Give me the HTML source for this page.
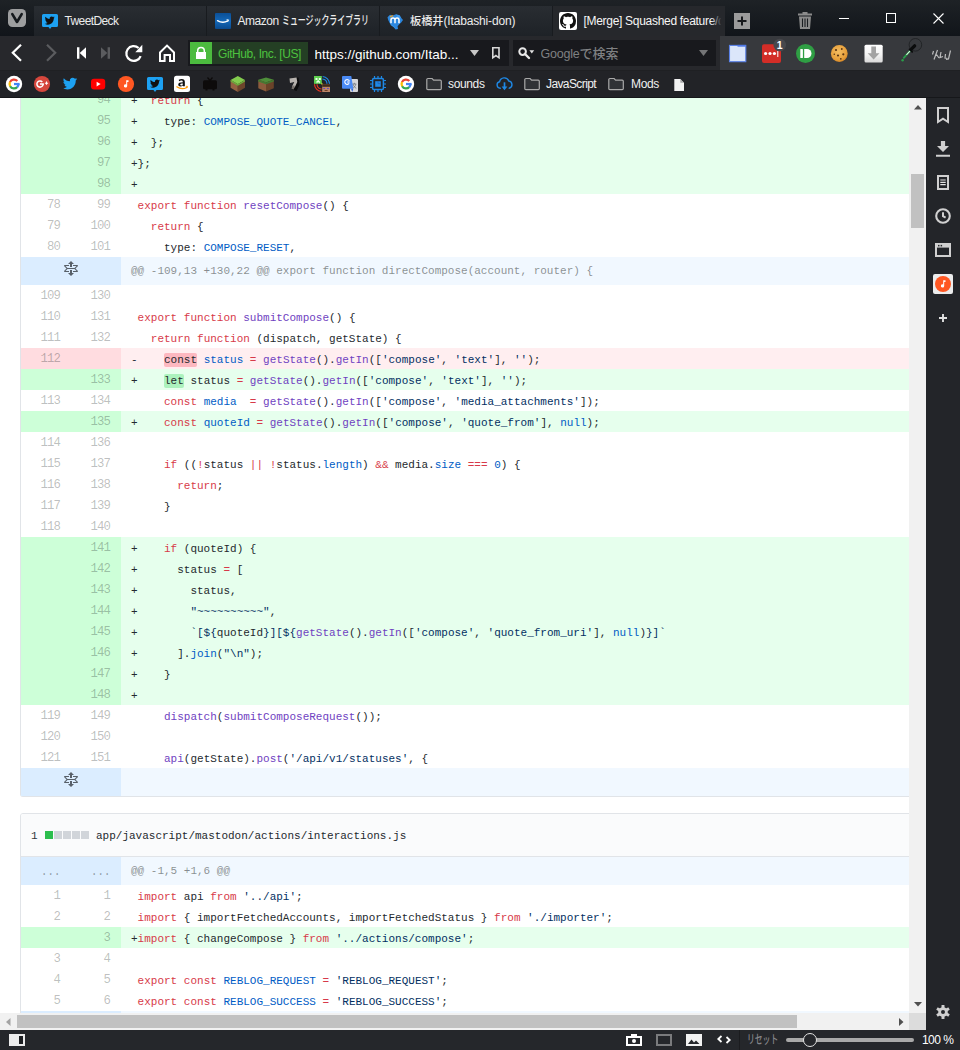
<!DOCTYPE html>
<html lang="ja">
<head>
<meta charset="utf-8">
<title>[Merge] Squashed feature/quote</title>
<style>
*{box-sizing:border-box}
html,body{margin:0;padding:0}
body{width:960px;height:1050px;overflow:hidden;background:#222428;position:relative;font-family:"Liberation Sans","Noto Sans CJK JP",sans-serif;font-size:12px;color:#e6e6e6}
.abs{position:absolute}
svg{display:block;overflow:visible}
/* ---------- page content ---------- */
#content{position:absolute;left:0;top:98px;width:909px;height:915px;background:#fff;overflow:hidden}
.file{position:absolute;left:20px;width:1400px;border:1px solid #e1e4e8;border-radius:3px;background:#fff}
#f1{top:-40px;border-top:0;border-radius:0 0 3px 3px;padding-top:31px}
#f2{top:715px}
.r{display:flex;height:21px;font:11px/24px "Liberation Mono","DejaVu Sans Mono",monospace;color:#24292e;white-space:pre;overflow:hidden}
.n{width:50px;padding:0 10.800px 0 10px;text-align:right;color:rgba(27,31,35,.3);flex:none;font-size:12.300px;letter-spacing:-.78px;line-height:23px}
.n2{width:100px;flex:none;position:relative}
.c{padding-left:10px;flex:1}
.r.a{background:#e6ffed}.r.a .n{background:#cdffd8}
.r.d{background:#ffeef0}.r.d .n{background:#ffdce0}
.r.h{height:28px;line-height:29px;background:#f1f8ff;color:rgba(27,31,35,.5)}
.r.h .n,.r.h .n2{background:#dbedff}
.r.h .n{color:rgba(27,31,35,.38);line-height:31px}
.unf{position:absolute;left:43px;top:4px}
.k{color:#d73a49}.e{color:#6f42c1}.c1,.c .c{color:#005cc5}.s{color:#032f62}
.c span.c{padding:0;display:inline}
.a .x{background:#acf2bd;border-radius:2px;padding:1px 0}
.d .x{background:#fdb8c0;border-radius:2px;padding:1px 0}
.fh{height:43px;background:#fafbfc;border-bottom:1px solid #e1e4e8;border-radius:2px 2px 0 0;position:relative;font:11px/32px "Liberation Mono","DejaVu Sans Mono",monospace;color:#24292e;white-space:pre}
.fh .cnt{position:absolute;left:10px;top:5.600px;color:#2f363d}
.fh .nm{position:absolute;left:75px;top:5.600px}
.fh i{position:absolute;top:17px;width:8px;height:8px;background:#d1d5da}
.fh i.g{background:#2cbe4e}
/* ---------- browser chrome ---------- */
#tabbar{position:absolute;left:0;top:0;width:960px;height:36px;background:linear-gradient(#1e2226,#11151a)}
.tab{position:absolute;top:6px;height:30px;width:173px;background:linear-gradient(#292d32,#1e2227);border-right:1px solid #181b1f;color:#ececec;font-size:12px;line-height:30px;white-space:nowrap;overflow:hidden}
.tab.act{background:#26282c;color:#f6f6f6;border-right:0;width:172px}
.tab .fav{position:absolute;left:7.500px;top:7.500px;width:16px;height:16px}
.tab .tt{position:absolute;left:30.5px;top:0;letter-spacing:-.45px}
.jp{display:inline-block;transform-origin:0 50%;letter-spacing:0;font-weight:500}
#addr{position:absolute;left:0;top:36px;width:960px;height:34px;background:#27282c}
#bm{position:absolute;left:0;top:70px;width:960px;height:28px;background:#222327;border-top:1px solid #1f2023;border-bottom:1px solid #16171a}
.field{position:absolute;top:5px;height:25px;background:#18191d}
.bi{position:absolute;top:5px;width:16px;height:16px}
.bt{position:absolute;top:0;line-height:26px;font-size:12px;color:#f0f0f0;letter-spacing:-.35px;white-space:nowrap}
#ext{position:absolute;left:720px;top:0;width:240px;height:34px;background:#37393d}
#vs{position:absolute;left:909px;top:98px;width:17px;height:915px;background:#f1f1f1}
#hs{position:absolute;left:0;top:1013px;width:909px;height:17px;background:#f1f1f1}
#corner{position:absolute;left:909px;top:1013px;width:17px;height:17px;background:#dcdcdc}
.thumb{position:absolute;background:#c1c1c1}
#panel{position:absolute;left:926px;top:98px;width:34px;height:932px;background:#232529}
#panel svg{position:absolute}
#status{position:absolute;left:0;top:1030px;width:960px;height:20px;background:#25272b}
#status svg{position:absolute}

</style>
</head>
<body>
<div id="content">
<div class="file" id="f1">
<div class="r a"><div class="n"></div><div class="n">94</div><div class="c">+  <span class="k">return</span> {</div></div>
<div class="r a"><div class="n"></div><div class="n">95</div><div class="c">+    type: <span class="c">COMPOSE_QUOTE_CANCEL</span>,</div></div>
<div class="r a"><div class="n"></div><div class="n">96</div><div class="c">+  };</div></div>
<div class="r a"><div class="n"></div><div class="n">97</div><div class="c">+};</div></div>
<div class="r a"><div class="n"></div><div class="n">98</div><div class="c">+</div></div>
<div class="r"><div class="n">78</div><div class="n">99</div><div class="c"> <span class="k">export</span> <span class="k">function</span> <span class="e">resetCompose</span>() {</div></div>
<div class="r"><div class="n">79</div><div class="n">100</div><div class="c">   <span class="k">return</span> {</div></div>
<div class="r"><div class="n">80</div><div class="n">101</div><div class="c">     type: <span class="c">COMPOSE_RESET</span>,</div></div>
<div class="r h"><div class="n2"><svg class="unf" viewBox="0 0 14 16" width="14" height="16"><path fill="#586069" fill-rule="evenodd" d="M11.5 7.5L14 10c0 .55-.45 1-1 1H9v-1h3.5l-2-2h-7l-2 2H5v1H1c-.55 0-1-.45-1-1l2.5-2.5L0 5c0-.55.45-1 1-1h4v1H1.5l2 2h7l2-2H9V4h4c.55 0 1 .45 1 1l-2.5 2.5zM6 6h2V3h2L7 0 4 3h2v3zm2 3H6v3H4l3 3 3-3H8V9z"/></svg></div><div class="c">@@ -109,13 +130,22 @@ export function directCompose(account, router) {</div></div>
<div class="r"><div class="n">109</div><div class="n">130</div><div class="c"></div></div>
<div class="r"><div class="n">110</div><div class="n">131</div><div class="c"> <span class="k">export</span> <span class="k">function</span> <span class="e">submitCompose</span>() {</div></div>
<div class="r"><div class="n">111</div><div class="n">132</div><div class="c">   <span class="k">return</span> <span class="k">function</span> (dispatch, getState) {</div></div>
<div class="r d"><div class="n">112</div><div class="n"></div><div class="c">-    <span class="x">const</span> <span class="c">status</span> <span class="k">=</span> <span class="e">getState</span>().<span class="e">getIn</span>([<span class="s">'compose'</span>, <span class="s">'text'</span>], <span class="s">''</span>);</div></div>
<div class="r a"><div class="n"></div><div class="n">133</div><div class="c">+    <span class="x">let</span> status <span class="k">=</span> <span class="e">getState</span>().<span class="e">getIn</span>([<span class="s">'compose'</span>, <span class="s">'text'</span>], <span class="s">''</span>);</div></div>
<div class="r"><div class="n">113</div><div class="n">134</div><div class="c">     <span class="k">const</span> <span class="c">media</span>  <span class="k">=</span> <span class="e">getState</span>().<span class="e">getIn</span>([<span class="s">'compose'</span>, <span class="s">'media_attachments'</span>]);</div></div>
<div class="r a"><div class="n"></div><div class="n">135</div><div class="c">+    <span class="k">const</span> <span class="c">quoteId</span> <span class="k">=</span> <span class="e">getState</span>().<span class="e">getIn</span>([<span class="s">'compose'</span>, <span class="s">'quote_from'</span>], <span class="c">null</span>);</div></div>
<div class="r"><div class="n">114</div><div class="n">136</div><div class="c"></div></div>
<div class="r"><div class="n">115</div><div class="n">137</div><div class="c">     <span class="k">if</span> ((<span class="k">!</span>status <span class="k">||</span> <span class="k">!</span>status.<span class="c">length</span>) <span class="k">&amp;&amp;</span> media.<span class="c">size</span> <span class="k">===</span> <span class="c">0</span>) {</div></div>
<div class="r"><div class="n">116</div><div class="n">138</div><div class="c">       <span class="k">return</span>;</div></div>
<div class="r"><div class="n">117</div><div class="n">139</div><div class="c">     }</div></div>
<div class="r"><div class="n">118</div><div class="n">140</div><div class="c"></div></div>
<div class="r a"><div class="n"></div><div class="n">141</div><div class="c">+    <span class="k">if</span> (quoteId) {</div></div>
<div class="r a"><div class="n"></div><div class="n">142</div><div class="c">+      status <span class="k">=</span> [</div></div>
<div class="r a"><div class="n"></div><div class="n">143</div><div class="c">+        status,</div></div>
<div class="r a"><div class="n"></div><div class="n">144</div><div class="c">+        <span class="s">"~~~~~~~~~~"</span>,</div></div>
<div class="r a"><div class="n"></div><div class="n">145</div><div class="c">+        <span class="s">`[${</span>quoteId<span class="s">}][${</span><span class="e">getState</span>().<span class="e">getIn</span>([<span class="s">'compose'</span>, <span class="s">'quote_from_uri'</span>], <span class="c">null</span>)<span class="s">}]`</span></div></div>
<div class="r a"><div class="n"></div><div class="n">146</div><div class="c">+      ].<span class="c">join</span>(<span class="s">"\n"</span>);</div></div>
<div class="r a"><div class="n"></div><div class="n">147</div><div class="c">+    }</div></div>
<div class="r a"><div class="n"></div><div class="n">148</div><div class="c">+</div></div>
<div class="r"><div class="n">119</div><div class="n">149</div><div class="c">     <span class="e">dispatch</span>(<span class="e">submitComposeRequest</span>());</div></div>
<div class="r"><div class="n">120</div><div class="n">150</div><div class="c"></div></div>
<div class="r"><div class="n">121</div><div class="n">151</div><div class="c">     <span class="e">api</span>(getState).<span class="e">post</span>(<span class="s">'/api/v1/statuses'</span>, {</div></div>
<div class="r h"><div class="n2"><svg class="unf" viewBox="0 0 14 16" width="14" height="16"><path fill="#586069" fill-rule="evenodd" d="M11.5 7.5L14 10c0 .55-.45 1-1 1H9v-1h3.5l-2-2h-7l-2 2H5v1H1c-.55 0-1-.45-1-1l2.5-2.5L0 5c0-.55.45-1 1-1h4v1H1.5l2 2h7l2-2H9V4h4c.55 0 1 .45 1 1l-2.5 2.5zM6 6h2V3h2L7 0 4 3h2v3zm2 3H6v3H4l3 3 3-3H8V9z"/></svg></div><div class="c"></div></div>
</div>
<div class="file" id="f2">
<div class="fh"><span class="cnt">1</span><i class="g" style="left:24px"></i><i style="left:33px"></i><i style="left:42px"></i><i style="left:51px"></i><i style="left:60px"></i><span class="nm">app/javascript/mastodon/actions/interactions.js</span></div>
<div class="r h"><div class="n">...</div><div class="n">...</div><div class="c">@@ -1,5 +1,6 @@</div></div>
<div class="r"><div class="n">1</div><div class="n">1</div><div class="c"> <span class="k">import</span> api <span class="k">from</span> <span class="s">'../api'</span>;</div></div>
<div class="r"><div class="n">2</div><div class="n">2</div><div class="c"> <span class="k">import</span> { importFetchedAccounts, importFetchedStatus } <span class="k">from</span> <span class="s">'./importer'</span>;</div></div>
<div class="r a"><div class="n"></div><div class="n">3</div><div class="c">+<span class="k">import</span> { changeCompose } <span class="k">from</span> <span class="s">'../actions/compose'</span>;</div></div>
<div class="r"><div class="n">3</div><div class="n">4</div><div class="c"></div></div>
<div class="r"><div class="n">4</div><div class="n">5</div><div class="c"> <span class="k">export</span> <span class="k">const</span> <span class="c">REBLOG_REQUEST</span> <span class="k">=</span> <span class="s">'REBLOG_REQUEST'</span>;</div></div>
<div class="r"><div class="n">5</div><div class="n">6</div><div class="c"> <span class="k">export</span> <span class="k">const</span> <span class="c">REBLOG_SUCCESS</span> <span class="k">=</span> <span class="s">'REBLOG_SUCCESS'</span>;</div></div>
<div class="r h"><div class="n2"></div><div class="c"></div></div>
</div>
</div>
<div id="tabbar">
  <svg class="abs" style="left:8px;top:9px" width="18" height="18" viewBox="0 0 18 18"><rect width="18" height="18" rx="4.5" fill="#9d9e9f"/><path d="M4.3 5.2 L9 13 L13.7 5.2" fill="none" stroke="#15191d" stroke-width="2.6" stroke-linecap="round" stroke-linejoin="round"/></svg>
  <div class="tab" style="left:34px">
    <svg class="fav" viewBox="0 0 16 16"><path d="M1.5 0h13A1.5 1.5 0 0 1 16 1.500v10A1.500 1.500 0 0 1 14.500 13H9.500L8 15 6.500 13H1.500A1.500 1.500 0 0 1 0 11.500v-10A1.500 1.500 0 0 1 1.500 0z" fill="#1da1f2"/><path d="M12.700 3.400c-.4.200-.8.300-1.200.350.450-.250.750-.650.900-1.150-.4.250-.85.400-1.300.500a2.050 2.050 0 0 0-3.500 1.850C5.900 4.850 4.400 4.050 3.400 2.800c-.55.950-.25 2.150.650 2.750-.350 0-.650-.1-.950-.250 0 1 .7 1.850 1.650 2.050-.3.100-.6.100-.9.050.250.850 1.050 1.400 1.900 1.450-.85.650-1.950.950-3.050.850.950.600 2.050.950 3.150.950 3.800 0 5.900-3.150 5.900-5.900v-.250c.4-.3.750-.650 1-1.100z" fill="#111"/></svg>
    <span class="tt" style="letter-spacing:-.62px">TweetDeck</span>
  </div>
  <div class="tab" style="left:207px">
    <svg class="fav" style="left:7.800px;top:6.500px" viewBox="0 0 16 16"><defs><linearGradient id="amz" x1="0" y1="0" x2="0" y2="1"><stop offset="0" stop-color="#0b4f96"/><stop offset=".5" stop-color="#1468b8"/><stop offset="1" stop-color="#0a4a8e"/></linearGradient></defs><rect width="16" height="16" rx="1" fill="url(#amz)"/><path d="M2.500 7.600c3.400 2.100 7.300 2 10.300.3" fill="none" stroke="#fff" stroke-width="1.300" stroke-linecap="round"/><path d="M11.600 6.700l2 .2-.9 1.800" fill="none" stroke="#fff" stroke-width=".9"/></svg>
    <span class="tt">Amazon <span class="jp" style="transform:scaleX(.66)">ミュージックライブラリ</span></span>
  </div>
  <div class="tab" style="left:380px">
    <svg class="fav" style="left:7px;top:7.500px" viewBox="0 0 16 16"><path d="M.5 3.200L3 .8 5.800 1.600 9 .2 12.800 1.200 14.300 4 16 6 14.200 8.600 12 10.500 10.600 12.200 11 15 8.600 15.500 6.500 13 4 11.500 2.400 8.500 1.200 6z" fill="#2b87df"/><path d="M9 .6l3.500.8 1.300 2.600-3 .5zM3 9l3.500 3 2 2.500-3-2.500z" fill="#4aa3f2" opacity=".7"/><path d="M4 9.200V6a2 2 0 0 1 4 0v3.200M8 6a2 2 0 0 1 4 0v3.200" fill="none" stroke="#fff" stroke-width="1.500"/><path d="M3 3.300a3 3 0 0 1 3.300-1.300" fill="none" stroke="#f5a21a" stroke-width="1.200"/></svg>
    <span class="tt"><span class="jp" style="transform:scaleX(.97);font-size:11.500px;margin-left:-.500px">板橋井</span><span style="margin-left:-1px;letter-spacing:-.16px">(Itabashi-don)</span></span>
  </div>
  <div class="tab act" style="left:553px">
    <svg class="fav" style="left:6px;top:6px;width:18px;height:18px" viewBox="0 0 18 18"><rect width="18" height="18" rx="2" fill="#fff"/><path transform="translate(1 1)" fill="#111" fill-rule="evenodd" d="M8 0C3.580 0 0 3.580 0 8c0 3.540 2.290 6.530 5.470 7.590.4.070.550-.170.550-.380 0-.190-.010-.820-.010-1.490-2.010.370-2.530-.490-2.690-.940-.090-.230-.480-.940-.820-1.130-.280-.150-.680-.520-.010-.530.630-.010 1.080.580 1.230.820.720 1.210 1.870.870 2.330.660.070-.520.280-.870.510-1.070-1.780-.200-3.640-.890-3.640-3.950 0-.870.310-1.590.820-2.150-.080-.200-.360-1.020.080-2.120 0 0 .670-.210 2.200.820.640-.180 1.320-.270 2-.270.680 0 1.360.090 2 .270 1.530-1.040 2.200-.820 2.200-.820.440 1.100.160 1.920.080 2.120.510.560.820 1.270.820 2.150 0 3.070-1.870 3.750-3.650 3.950.290.250.540.730.540 1.480 0 1.070-.010 1.930-.010 2.200 0 .210.150.460.550.380A8.013 8.013 0 0 0 16 8c0-4.420-3.580-8-8-8z"/></svg>
    <span class="tt" style="letter-spacing:-.3px">[Merge] Squashed feature/quote</span>
    <div class="abs" style="right:0;top:0;width:14px;height:30px;background:linear-gradient(90deg,rgba(38,40,44,0),#26282c 75%)"></div>
  </div>
  <svg class="abs" style="left:734px;top:13px" width="16" height="16" viewBox="0 0 16 16"><rect width="16" height="16" fill="#9b9b9b"/><path d="M8 3.500v9M3.500 8h9" stroke="#17191c" stroke-width="2"/></svg>
  <svg class="abs" style="left:798px;top:12px" width="14" height="17" viewBox="0 0 14 17"><path d="M4.500 0h5v1.500H14V3.500H0V1.500h4.500zM1 4.500h12L12 17H2z" fill="#8b8b8b"/><path d="M4.500 6.500v8.500M7 6.500v8.500M9.500 6.500v8.500" stroke="#1a1d21" stroke-width="1.100"/></svg>
  <svg class="abs" style="left:838px;top:12px" width="110" height="12" viewBox="0 0 110 12"><path d="M1 6.500h10" stroke="#fff" stroke-width="1"/><rect x="48.500" y="1.500" width="9" height="9" fill="none" stroke="#fff" stroke-width="1"/><path d="M95.500 1.500l10 10M105.500 1.500l-10 10" stroke="#fff" stroke-width="1.100"/></svg>
</div>
<div id="addr">
  <svg class="abs" style="left:0;top:0" width="190" height="35" viewBox="0 0 190 35">
    <g transform="translate(0 -.8)">
    <path d="M21 9.500L12.800 17.500 21 25.500" fill="none" stroke="#fff" stroke-width="2.200"/>
    <path d="M47 9.500L55.200 17.500 47 25.500" fill="none" stroke="#5b5c5f" stroke-width="2.200"/>
    <path d="M77 12h2.400v11.500H77zM86 12v11.500l-6.300-5.750z" fill="#fff"/>
    <path d="M107.600 12h2.400v11.500h-2.400zM101 12v11.500l6.300-5.750z" fill="#5b5c5f"/>
    </g>
    <path d="M138.65 12.00A7.40 7.40 0 1 0 140.65 20.03" fill="none" stroke="#fff" stroke-width="2.200"/>
    <path d="M142.300 8.800v7.500h-7z" fill="#fff"/>
    <path d="M160 25V16.500L167 9.600 174 16.500V25H170V19H164.600V25z" fill="none" stroke="#fff" stroke-width="2" stroke-linejoin="miter"/>
  </svg>
  <div class="field" style="left:188px;top:4px;width:321px;height:26px">
    <div class="abs" style="left:2px;top:2px;width:22px;height:22px;background:#4cbb3f">
      <svg class="abs" style="left:5px;top:4px" width="12" height="14" viewBox="0 0 12 14"><path d="M2.700 6.500V4.700a3.300 3.300 0 0 1 6.600 0v1.800" fill="none" stroke="#fff" stroke-width="1.500"/><rect x="1" y="6" width="10" height="7" fill="#fff"/></svg>
    </div>
    <div class="abs" style="left:24px;top:2px;width:96px;height:22px;background:#243f24;color:#4dc23f;font-size:12px;line-height:25px;overflow:hidden;letter-spacing:-.42px;padding-left:6px;white-space:nowrap">GitHub, Inc. [US]</div>
    <div class="abs" style="left:126.500px;top:0;height:26px;line-height:29px;overflow:hidden;font-size:13.500px;color:#fff;letter-spacing:0;white-space:nowrap">https://github.com/Itab...</div>
    <svg class="abs" style="left:282px;top:10px" width="9" height="6" viewBox="0 0 9 6"><path d="M0 0h9L4.500 6z" fill="#c8c8c8"/></svg>
    <svg class="abs" style="left:304.300px;top:6.700px" width="7.800" height="12" viewBox="0 0 7.800 12"><path d="M.8 .8h6.200v10L3.900 8.600 .8 10.800z" fill="none" stroke="#d8d8d8" stroke-width="1.600"/></svg>
  </div>
  <div class="field" style="left:513px;top:4px;width:203px;height:26px">
    <svg class="abs" style="left:5px;top:7px" width="18" height="13" viewBox="0 0 18 13"><circle cx="4.600" cy="4.600" r="3.300" fill="none" stroke="#e8e8e8" stroke-width="2"/><path d="M7 7l4 4" stroke="#e8e8e8" stroke-width="2.400" stroke-linecap="round"/><path d="M11.400 3.200h4.800l-2.400 3.400z" fill="#e0e0e0"/></svg>
    <div class="abs" style="left:27.500px;top:0;height:26px;line-height:28px;overflow:hidden;font-size:12.500px;color:#7f8082;white-space:nowrap;letter-spacing:-.2px">Google<span style="font-size:13px;letter-spacing:0;font-weight:500">で検索</span></div>
    <svg class="abs" style="left:186px;top:10px" width="9" height="6" viewBox="0 0 9 6"><path d="M0 0h9L4.500 6z" fill="#747577"/></svg>
  </div>
  <div id="ext">
    <svg class="abs" style="left:0;top:0" width="240" height="34" viewBox="0 0 240 34">
      <!-- tab-like -->
      <rect x="9.500" y="9.400" width="16.300" height="16.300" fill="#dbe6fa" stroke="#5b82e8" stroke-width="1.100"/><path d="M17.500 9.800h8.300" stroke="#4f78e6" stroke-width="1.800"/>
      <!-- lastpass -->
      <rect x="42" y="8.200" width="19" height="18.700" rx="2" fill="#d32d27"/>
      <circle cx="45.600" cy="17.500" r="1.600" fill="#fff"/><circle cx="50" cy="17.500" r="1.600" fill="#fff"/><circle cx="54.400" cy="17.500" r="1.600" fill="#fff"/><rect x="57.300" y="14.300" width="1" height="6.700" fill="#fff"/>
      <circle cx="59.750" cy="9" r="6.300" fill="#47484c"/>
      <text x="59.700" y="12.700" font-size="10.500" font-weight="bold" font-family="Liberation Sans, sans-serif" text-anchor="middle" fill="#fff">1</text>
      <!-- pushbullet -->
      <circle cx="85.500" cy="17.500" r="9.500" fill="#2f9e44"/>
      <rect x="80.300" y="13" width="2.600" height="9" rx=".6" fill="#fff"/>
      <path d="M84.200 13h2.800a4.500 4.500 0 0 1 0 9h-2.800z" fill="#fff"/>
      <!-- cookie -->
      <defs><radialGradient id="ck" cx=".45" cy=".4" r=".65"><stop offset="0" stop-color="#f3bd62"/><stop offset=".7" stop-color="#e8a13c"/><stop offset="1" stop-color="#cf7f22"/></radialGradient><linearGradient id="dl" x1="0" y1="0" x2="0" y2="1"><stop offset="0" stop-color="#fff"/><stop offset=".55" stop-color="#f4f4f4"/><stop offset="1" stop-color="#d9d9d9"/></linearGradient></defs>
      <circle cx="119.300" cy="17.500" r="8.400" fill="url(#ck)"/>
      <circle cx="116" cy="14" r="1.100" fill="#5b3513"/><circle cx="121.800" cy="13" r=".9" fill="#5b3513"/><circle cx="123.300" cy="18.300" r="1.100" fill="#5b3513"/><circle cx="118" cy="19.500" r="1.100" fill="#5b3513"/><circle cx="114.300" cy="18.300" r=".8" fill="#5b3513"/><circle cx="120.800" cy="22.800" r=".9" fill="#5b3513"/>
      <!-- download -->
      <rect x="144.500" y="8.700" width="18.200" height="17.800" rx="1.500" fill="url(#dl)"/>
      <path d="M151.300 10.500h4.700v6.700h3.500L153.600 23.400l-5.900-6.200h3.600z" fill="#a3a3a3"/>
      <!-- eyedropper -->
      <circle cx="195.400" cy="8.800" r="6.300" fill="none" stroke="#1f2124" stroke-width=".9"/>
      <path d="M183.800 21.800L190.200 14.600" stroke="#2a9d4a" stroke-width="1.900" stroke-linecap="round"/>
      <path d="M186.800 18.500L190 15" stroke="#e8f5ec" stroke-width="1.100" stroke-linecap="round"/>
      <path d="M189.600 13.300l2.600 2.600" stroke="#0b0c0d" stroke-width="1.800" stroke-linecap="round"/>
      <path d="M191.600 12.900L194.600 9.900" stroke="#0b0c0d" stroke-width="3.400" stroke-linecap="round"/>
      <circle cx="182.600" cy="24.300" r="1.200" fill="#2a9d4a"/>
      <!-- scribble -->
      <g stroke="#dcdcdc" stroke-width="1.200" fill="none" opacity=".8">
        <path d="M213.500 15l-1 3.500M217.500 14l-3.500 9.500M216.500 18.500l2.500 3.500M221 16l-1 5.500 3-1M225.500 18l-.5 4 2.500.5M230.500 14.500l-2 8.500-2.500.5"/>
      </g>
    </svg>
  </div>
</div>
<div id="bm">
<svg class="bi" style="left:6px" viewBox="0 0 16 16"><circle cx="8" cy="8" r="8.200" fill="#fff"/><path d="M3.97 6.12A4.45 4.45 0 0 1 11.31 5.02" fill="none" stroke="#ea4335" stroke-width="2.3"/><path d="M4.23 10.36A4.45 4.45 0 0 1 4.04 5.98" fill="none" stroke="#fbbc05" stroke-width="2.3"/><path d="M11.31 10.98A4.45 4.45 0 0 1 4.15 10.22" fill="none" stroke="#34a853" stroke-width="2.3"/><path d="M12.45 8.00A4.45 4.45 0 0 1 11.20 11.09" fill="none" stroke="#4285f4" stroke-width="2.3"/><path d="M8 6.900h5.600v2.250H8z" fill="#4285f4"/></svg>
<svg class="bi" style="left:34px" viewBox="0 0 16 16"><circle cx="8" cy="8" r="8.100" fill="#d6473d"/><path d="M9.10 8.00A3.10 3.10 0 1 1 8.30 5.93" fill="none" stroke="#fff" stroke-width="1.500"/><path d="M6 8h3.850" stroke="#fff" stroke-width="1.500"/><path d="M12.500 5.600v3.200M10.900 7.200h3.200" stroke="#fff" stroke-width="1.100"/></svg>
<svg class="bi" style="left:62px" viewBox="0 0 16 16"><path d="M15.200 3.100c-.55.250-1.100.400-1.700.480.620-.370 1.080-.950 1.300-1.640-.570.340-1.200.580-1.880.710a2.950 2.950 0 0 0-5.030 2.690C5.440 5.220 3.270 4.050 1.810 2.260c-.780 1.350-.380 3.070.910 3.940-.470-.010-.930-.140-1.340-.370v.040c0 1.400 1 2.620 2.370 2.900-.430.120-.890.130-1.330.050.390 1.200 1.500 2.020 2.760 2.050A5.930 5.930 0 0 1 .800 12.090 8.360 8.360 0 0 0 5.330 13.400c5.430 0 8.400-4.500 8.400-8.400v-.380c.580-.420 1.080-.940 1.470-1.520z" fill="#1da1f2"/></svg>
<svg class="bi" style="left:90px" viewBox="0 0 16 16"><rect x="1" y="2.700" width="14.200" height="10.800" rx="3" fill="#f00"/><path d="M6.600 5.700v4.800l4-2.400z" fill="#fff"/></svg>
<svg class="bi" style="left:118px" viewBox="0 0 16 16"><circle cx="8" cy="8" r="8.100" fill="#ff5722"/><path d="M8.200 4.300h2.300v1.600H9.200v4a1.650 1.650 0 1 1-1-1.500z" fill="#fff"/></svg>
<svg class="bi" style="left:146.500px" viewBox="0 0 16 16"><path d="M1.500 1h13A1.500 1.500 0 0 1 16 2.500v10a1.500 1.500 0 0 1-1.500 1.500H9.500L8 16 6.500 14h-5A1.500 1.500 0 0 1 0 12.500v-10A1.500 1.500 0 0 1 1.500 1z" fill="#1da1f2"/><path transform="translate(2.400 2.300) scale(.7)" d="M15.200 3.100c-.55.250-1.100.400-1.700.480.620-.370 1.080-.950 1.300-1.640-.570.340-1.200.580-1.880.710a2.950 2.950 0 0 0-5.030 2.690C5.440 5.220 3.270 4.050 1.810 2.260c-.780 1.350-.380 3.070.910 3.940-.470-.010-.930-.140-1.340-.370v.040c0 1.400 1 2.620 2.370 2.900-.430.120-.890.130-1.330.050.390 1.200 1.500 2.020 2.760 2.050A5.930 5.930 0 0 1 .800 12.090 8.360 8.360 0 0 0 5.330 13.400c5.430 0 8.400-4.500 8.400-8.400v-.380c.580-.420 1.080-.940 1.470-1.520z" fill="#111"/></svg>
<svg class="bi" style="left:174px" viewBox="0 0 16 16"><rect width="16" height="16.300" y="-.2" rx="2.500" fill="#fff"/><path transform="translate(-1.900 -1.700) scale(1.250)" d="M10.200 9.600H8.700v-.7c-.5.600-1.200.9-2 .9-1.100 0-1.800-.7-1.800-1.600 0-1.400 1.300-1.900 3.700-1.900 0-.9-.3-1.300-1.200-1.300-.6 0-1.200.2-1.800.5l-.3-1.100c.7-.4 1.600-.6 2.400-.6 1.700 0 2.500.8 2.500 2.400zM8.600 7.300c-1.400 0-2.100.2-2.100.9 0 .4.300.7.800.7.600 0 1.100-.4 1.300-.8z" fill="#111"/><path d="M2.800 10.800c3.200 2.200 7 2.300 10 .6" fill="none" stroke="#f90" stroke-width="1.200" stroke-linecap="round"/><path d="M11.800 10.300l1.800.1-.8 1.700" fill="none" stroke="#f90" stroke-width=".9"/></svg>
<svg class="bi" style="left:202px" viewBox="0 0 16 16"><rect x="1" y="4.200" width="14" height="9" rx="1.500" fill="#0d0b0b"/><path d="M5.500 1.500l2.500 3 2.500-3" fill="none" stroke="#0d0b0b" stroke-width="1.300"/><rect x="3.500" y="13" width="2" height="1.500" fill="#0d0b0b"/><rect x="10.500" y="13" width="2" height="1.500" fill="#0d0b0b"/></svg>
<svg class="bi" style="left:230px" viewBox="0 0 16 16"><path d="M7.800 0l7.200 4-7.200 4.200L.600 4z" fill="#83cc4e"/><path d="M.600 4l7.200 4.200V16L.600 11.800z" fill="#946241"/><path d="M15 4L7.800 8.200V16l7.200-4.200z" fill="#6d452b"/><path d="M.600 4l7.200 4.200 7.200-4.200v1.600l-7.200 4.200L.600 5.600z" fill="#6aaf3c"/></svg>
<svg class="bi" style="left:258px" viewBox="0 0 16 16"><path d="M8 1.500l7.800 2.300L8 6.600.300 3.800z" fill="#4e8e3a"/><path d="M.300 3.800L8 6.600V15.500L.300 12.300z" fill="#8c5c3c"/><path d="M15.800 3.800L8 6.600V15.500l7.800-3.200z" fill="#6b4329"/><path d="M.300 3.800L8 6.600l7.800-2.800v1.700L8 8.300.300 5.500z" fill="#427a31"/></svg>
<svg class="bi" style="left:286px" viewBox="0 0 16 16"><path d="M6 2l6.500-.5L13.500 9l-3 6-4-1.500L8 9z" fill="#0c0c0d"/><path d="M3.500 2.500l7-1 .8 4.500-2.600 5.500-2.700-.8 2.200-4.700L4 7z" fill="#b7b2ae"/><path d="M6.500 9.500l2.300.3-1 3.700-2.300-.7z" fill="#77716c"/></svg>
<svg class="bi" style="left:314px" viewBox="0 0 16 16"><path d="M8.65 0.53A7.50 7.50 0 0 1 15.50 7.74" fill="none" stroke="#1e88e5" stroke-width="1.100"/><path d="M8.44 3.02A5.00 5.00 0 0 1 13.00 7.83" fill="none" stroke="#1e88e5" stroke-width="1.100"/><path d="M7.35 15.47A7.50 7.50 0 0 1 0.50 8.26" fill="none" stroke="#f4361e" stroke-width="1.100"/><path d="M7.56 12.98A5.00 5.00 0 0 1 3.00 8.17" fill="none" stroke="#f4361e" stroke-width="1.100"/><path d="M7 7l4 4" stroke="#f2d21b" stroke-width="1.100"/><rect width="7.800" height="7.800" fill="#5fd04f"/><path d="M1.500 2h2v2h-2zM4.800 2h2v2h-2zM3.500 4h1.300v1h1v2.300h-1v-1H3.500v1h-1V5h1z" fill="#e8ffe6"/><rect x="8.200" y="8.200" width="7.800" height="7.800" fill="#b98566"/><rect x="8.200" y="8.200" width="7.800" height="2.600" fill="#3d2a1a"/><rect x="9.300" y="12" width="1.800" height="1" fill="#5b49c8"/><rect x="13" y="12" width="1.800" height="1" fill="#5b49c8"/><rect x="10.600" y="14" width="3" height="1" fill="#6e3f2a"/></svg>
<svg class="bi" style="left:342px" viewBox="0 0 16 16"><rect x="8" y="3" width="8" height="13" rx="1" fill="#d4d6d9"/><path d="M10.300 8h4M12.300 6.800v1.200M11 8.200c.5 2 1.700 3.300 3.300 4M13.800 8.200c-.5 2-1.700 3.300-3.300 4" stroke="#6b7178" stroke-width=".8" fill="none"/><path d="M1 0h8.300l2 12.800H1a1 1 0 0 1-1-1V1a1 1 0 0 1 1-1z" fill="#4a8af4"/><path d="M9 12.800l2.300 0-1 3.200z" fill="#3367d6"/><path d="M7.17 7.38A2.40 2.40 0 1 1 7.38 4.99" fill="none" stroke="#fff" stroke-width="1.100"/><path d="M5.200 6h2.500" stroke="#fff" stroke-width="1.100"/></svg>
<svg class="bi" style="left:370px" viewBox="0 0 16 16"><g stroke="#1e88e5" stroke-width="1.200" fill="none"><path d="M4.5 0v2.500M4.5 13.500v2.500M0 4.5h2.500M13.500 4.5h2.500"/><path d="M8 0v2.500M8 13.500v2.500M0 8h2.500M13.500 8h2.500"/><path d="M11.5 0v2.500M11.5 13.500v2.500M0 11.5h2.500M13.500 11.5h2.500"/><rect x="2.600" y="2.600" width="10.800" height="10.800" rx="1.200" stroke-width="1.500"/></g><rect x="5.200" y="5.200" width="5.600" height="5.600" fill="#1e88e5"/><path d="M8 5.200v2.400h2.800" stroke="#2a5fb0" stroke-width=".8" fill="none"/></svg>
<svg class="bi" style="left:398px" viewBox="0 0 16 16"><circle cx="8" cy="8" r="8.200" fill="#fff"/><path d="M3.97 6.12A4.45 4.45 0 0 1 11.31 5.02" fill="none" stroke="#ea4335" stroke-width="2.3"/><path d="M4.23 10.36A4.45 4.45 0 0 1 4.04 5.98" fill="none" stroke="#fbbc05" stroke-width="2.3"/><path d="M11.31 10.98A4.45 4.45 0 0 1 4.15 10.22" fill="none" stroke="#34a853" stroke-width="2.3"/><path d="M12.45 8.00A4.45 4.45 0 0 1 11.20 11.09" fill="none" stroke="#4285f4" stroke-width="2.3"/><path d="M8 6.900h5.600v2.250H8z" fill="#4285f4"/></svg>
<svg class="bi" style="left:426px" viewBox="0 0 16 16"><path d="M.800 3.600a1.100 1.100 0 0 1 1.100-1.100h4.200l1.500 1.700h6.600a1.100 1.100 0 0 1 1.100 1.100v7.300a1.100 1.100 0 0 1-1.100 1.100H1.900a1.100 1.100 0 0 1-1.100-1.100z" fill="#303236" stroke="#a9a9a9" stroke-width="1.200"/></svg>
<span class="bt" style="left:448px">sounds</span>
<svg class="bi" style="left:495.500px;width:17px" viewBox="0 0 17 16"><path d="M4.300 12.200A3.300 3.300 0 0 1 3.600 5.700 4.800 4.800 0 0 1 12.800 5a3.700 3.700 0 0 1 .5 7.200" fill="none" stroke="#1e88e5" stroke-width="1.400" stroke-linecap="round"/><path d="M8.500 6.300v6" stroke="#1e88e5" stroke-width="1.700"/><path d="M5.600 10.600h5.800l-2.900 3.600z" fill="#1e88e5"/></svg>
<svg class="bi" style="left:524px" viewBox="0 0 16 16"><path d="M.800 3.600a1.100 1.100 0 0 1 1.100-1.100h4.200l1.500 1.700h6.600a1.100 1.100 0 0 1 1.100 1.100v7.300a1.100 1.100 0 0 1-1.100 1.100H1.900a1.100 1.100 0 0 1-1.100-1.100z" fill="#303236" stroke="#a9a9a9" stroke-width="1.200"/></svg>
<span class="bt" style="left:546px;letter-spacing:-.6px">JavaScript</span>
<svg class="bi" style="left:608px" viewBox="0 0 16 16"><path d="M.800 3.600a1.100 1.100 0 0 1 1.100-1.100h4.200l1.500 1.700h6.600a1.100 1.100 0 0 1 1.100 1.100v7.300a1.100 1.100 0 0 1-1.100 1.100H1.900a1.100 1.100 0 0 1-1.100-1.100z" fill="#303236" stroke="#a9a9a9" stroke-width="1.200"/></svg>
<span class="bt" style="left:631px">Mods</span>
<svg class="bi" style="left:674px;top:8px;width:10px;height:12px" viewBox="0 0 10 12"><path d="M.300 0h6L10 3.700V12H.300z" fill="#f2f2f2"/><path d="M6.300 0v3.700H10" fill="#a8a8a8"/></svg>
</div>
<div id="vs">
  <svg class="abs" style="left:4.500px;top:6.500px" width="8" height="4.500" viewBox="0 0 9 5"><path d="M0 5L4.500 0 9 5z" fill="#505050"/></svg>
  <div class="thumb" style="left:2px;top:76px;width:13px;height:54px"></div>
  <svg class="abs" style="left:4.500px;top:904px" width="8" height="4.500" viewBox="0 0 9 5"><path d="M0 0h9L4.500 5z" fill="#505050"/></svg>
</div>
<div id="hs">
  <svg class="abs" style="left:6px;top:4.500px" width="4.500" height="8" viewBox="0 0 5 9"><path d="M5 0v9L0 4.500z" fill="#a3a3a3"/></svg>
  <div class="thumb" style="left:17px;top:2px;width:780px;height:13px"></div>
  <svg class="abs" style="left:899px;top:4.500px" width="4.500" height="8" viewBox="0 0 5 9"><path d="M0 0v9l5-4.500z" fill="#505050"/></svg>
</div>
<div id="corner"></div>
<div id="panel">
  <!-- bookmark -->
  <svg style="left:11px;top:9px" width="12" height="17" viewBox="0 0 12 17"><path d="M1 1h10v14l-5-3.300-5 3.300z" fill="none" stroke="#d0d0d0" stroke-width="2"/></svg>
  <!-- download -->
  <svg style="left:10px;top:42px" width="14" height="17" viewBox="0 0 14 17"><path d="M4.900 1h4.200v5H13L7 12 1 6h3.900zM0 14.700h14v2H0z" fill="#d0d0d0"/></svg>
  <!-- notes -->
  <svg style="left:11px;top:77px" width="12" height="15" viewBox="0 0 12 15"><rect x="1" y="1" width="10" height="13" fill="none" stroke="#d0d0d0" stroke-width="2"/><path d="M3.300 4.400h5.400v1.200H3.300zM3.300 6.700h5.400v1.200H3.300zM3.300 9h5.400v1.200H3.300z" fill="#e4e4e4"/></svg>
  <!-- history -->
  <svg style="left:9px;top:110px" width="16" height="16" viewBox="0 0 16 16"><circle cx="8" cy="8" r="6.800" fill="none" stroke="#d0d0d0" stroke-width="2.100"/><path d="M8 4.200v4l2.600 1.500" fill="none" stroke="#d0d0d0" stroke-width="2"/></svg>
  <!-- window -->
  <svg style="left:9px;top:145px" width="16" height="14" viewBox="0 0 16 14"><rect x="1" y="1" width="14" height="12" fill="none" stroke="#d0d0d0" stroke-width="2"/><rect x="1" y="1" width="14" height="3.600" fill="#d0d0d0"/><rect x="3" y="1.900" width="1.500" height="1.500" fill="#25272b"/><rect x="5.600" y="1.900" width="1.500" height="1.500" fill="#25272b"/></svg>
  <!-- music web panel -->
  <svg style="left:7px;top:176px" width="20" height="20" viewBox="0 0 20 20"><rect width="20" height="20" rx="2" fill="#ececec"/><circle cx="10" cy="10" r="8" fill="#ff5722"/><path d="M10.200 6.300h2.300v1.600h-1.300v4a1.650 1.650 0 1 1-1-1.500z" fill="#fff"/></svg>
  <!-- plus -->
  <svg style="left:13px;top:216px" width="8" height="8" viewBox="0 0 8 8"><path d="M4 0v8M0 4h8" stroke="#e0e0e0" stroke-width="1.900"/></svg>
  <!-- gear -->
  <svg style="left:10px;top:907px" width="14" height="14" viewBox="0 0 14 14"><g fill="#d0d0d0"><circle cx="7" cy="7" r="4.800"/><rect x="5.500" y="0" width="3" height="14" rx=".5"/><rect x="5.500" y="0" width="3" height="14" rx=".5" transform="rotate(60 7 7)"/><rect x="5.500" y="0" width="3" height="14" rx=".5" transform="rotate(120 7 7)"/></g><circle cx="7" cy="7" r="2" fill="#25272b"/></svg>
</div>
<div id="status">
  <svg style="left:9px;top:4px" width="16" height="12" viewBox="0 0 16 12"><rect width="16" height="12" fill="#ececec"/><rect x="10" y="2" width="4" height="8" fill="#1d1f22"/></svg>
  <!-- camera -->
  <svg style="left:626px;top:4px" width="16" height="12" viewBox="0 0 16 12"><path d="M1 3h14v8H1z" fill="none" stroke="#fff" stroke-width="2"/><rect x="5" y="0" width="6" height="3" fill="#fff"/><circle cx="8" cy="7" r="2" fill="#fff"/></svg>
  <!-- tiling -->
  <svg style="left:656px;top:4px" width="16" height="12" viewBox="0 0 16 12"><rect x="1" y="1" width="14" height="10" fill="none" stroke="#7a7b7d" stroke-width="2"/></svg>
  <!-- image -->
  <svg style="left:686px;top:4px" width="16" height="12" viewBox="0 0 16 12"><rect width="16" height="12" fill="#f2f2f2"/><path d="M2 10l3.500-4.500 2.500 3 2-2L13.500 10z" fill="#25272b"/></svg>
  <!-- code -->
  <svg style="left:717px;top:5px" width="14" height="9" viewBox="0 0 14 9"><path d="M4.500 1L1.300 4 4.500 7M9.500 2l3.200 3-3.200 3" fill="none" stroke="#fff" stroke-width="1.800"/></svg>
  <div class="abs" style="left:739px;top:0;width:1px;height:20px;background:#1b1c1f"></div>
  <div class="abs" style="left:746.500px;top:0;line-height:20px;font-size:12px;color:#85868a;white-space:nowrap"><span class="jp" style="transform:scaleX(.65)">リセット</span></div>
  <div class="abs" style="left:786px;top:8px;width:128px;height:4px;border-radius:2px;background:#a9a9a9"></div>
  <div class="abs" style="left:803px;top:3px;width:14px;height:14px;border-radius:7px;background:#25272b;border:1.500px solid #e4e4e4"></div>
  <div class="abs" style="left:922px;top:0;line-height:20px;font-size:12px;color:#fff;white-space:nowrap;letter-spacing:-.55px">100 %</div>
</div>

</body>
</html>
